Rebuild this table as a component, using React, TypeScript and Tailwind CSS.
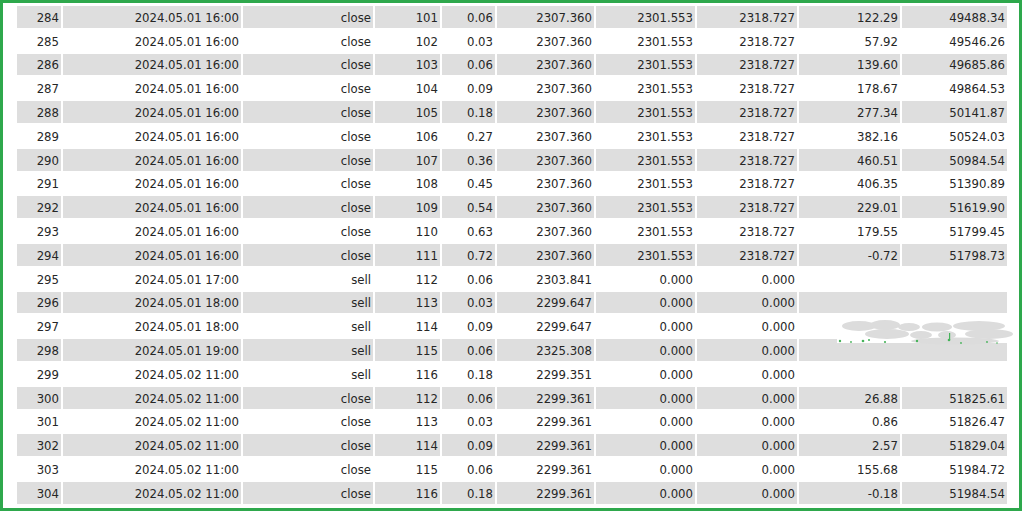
const rows: string[][] = [
  ["284", "2024.05.01 16:00", "close", "101", "0.06", "2307.360", "2301.553", "2318.727", "122.29", "49488.34"],
  ["285", "2024.05.01 16:00", "close", "102", "0.03", "2307.360", "2301.553", "2318.727", "57.92", "49546.26"],
  ["286", "2024.05.01 16:00", "close", "103", "0.06", "2307.360", "2301.553", "2318.727", "139.60", "49685.86"],
  ["287", "2024.05.01 16:00", "close", "104", "0.09", "2307.360", "2301.553", "2318.727", "178.67", "49864.53"],
  ["288", "2024.05.01 16:00", "close", "105", "0.18", "2307.360", "2301.553", "2318.727", "277.34", "50141.87"],
  ["289", "2024.05.01 16:00", "close", "106", "0.27", "2307.360", "2301.553", "2318.727", "382.16", "50524.03"],
  ["290", "2024.05.01 16:00", "close", "107", "0.36", "2307.360", "2301.553", "2318.727", "460.51", "50984.54"],
  ["291", "2024.05.01 16:00", "close", "108", "0.45", "2307.360", "2301.553", "2318.727", "406.35", "51390.89"],
  ["292", "2024.05.01 16:00", "close", "109", "0.54", "2307.360", "2301.553", "2318.727", "229.01", "51619.90"],
  ["293", "2024.05.01 16:00", "close", "110", "0.63", "2307.360", "2301.553", "2318.727", "179.55", "51799.45"],
  ["294", "2024.05.01 16:00", "close", "111", "0.72", "2307.360", "2301.553", "2318.727", "-0.72", "51798.73"],
  ["295", "2024.05.01 17:00", "sell", "112", "0.06", "2303.841", "0.000", "0.000"],
  ["296", "2024.05.01 18:00", "sell", "113", "0.03", "2299.647", "0.000", "0.000"],
  ["297", "2024.05.01 18:00", "sell", "114", "0.09", "2299.647", "0.000", "0.000"],
  ["298", "2024.05.01 19:00", "sell", "115", "0.06", "2325.308", "0.000", "0.000"],
  ["299", "2024.05.02 11:00", "sell", "116", "0.18", "2299.351", "0.000", "0.000"],
  ["300", "2024.05.02 11:00", "close", "112", "0.06", "2299.361", "0.000", "0.000", "26.88", "51825.61"],
  ["301", "2024.05.02 11:00", "close", "113", "0.03", "2299.361", "0.000", "0.000", "0.86", "51826.47"],
  ["302", "2024.05.02 11:00", "close", "114", "0.09", "2299.361", "0.000", "0.000", "2.57", "51829.04"],
  ["303", "2024.05.02 11:00", "close", "115", "0.06", "2299.361", "0.000", "0.000", "155.68", "51984.72"],
  ["304", "2024.05.02 11:00", "close", "116", "0.18", "2299.361", "0.000", "0.000", "-0.18", "51984.54"],
];

// blurred leftover blob sitting over rows 297/298
const Smudge = () => (
  <svg
    className="pointer-events-none absolute left-[834px] top-[313px]"
    width="178"
    height="34"
    viewBox="0 0 178 34"
  >
    <rect x="0" y="0" width="178" height="27" fill="#ffffff" />
    <g fill="#dcdcdc">
      <ellipse cx="22" cy="10" rx="17" ry="5" />
      <ellipse cx="48" cy="9" rx="15" ry="5" />
      <ellipse cx="72" cy="11" rx="11" ry="4" />
      <ellipse cx="100" cy="11" rx="15" ry="4.5" />
      <ellipse cx="142" cy="10" rx="26" ry="5" />
      <ellipse cx="50" cy="18" rx="22" ry="5" />
      <ellipse cx="84" cy="19" rx="11" ry="4" />
      <ellipse cx="110" cy="19" rx="9" ry="4" />
      <ellipse cx="152" cy="18" rx="24" ry="5" />
      <ellipse cx="118" cy="25" rx="44" ry="3.5" />
    </g>
    <g fill="#46b35a">
      <circle cx="3" cy="25" r="1.2" />
      <circle cx="14" cy="26" r="0.9" />
      <circle cx="26" cy="25" r="1.3" />
      <circle cx="32" cy="24" r="1" />
      <circle cx="48" cy="26" r="1.1" />
      <circle cx="80" cy="25" r="1.2" />
      <circle cx="112" cy="24" r="1.3" />
      <rect x="112" y="17" width="1.2" height="7" />
      <circle cx="124" cy="27" r="0.9" />
      <circle cx="150" cy="26" r="0.9" />
      <circle cx="160" cy="27" r="0.8" />
    </g>
  </svg>
);

const cols =
  "grid grid-cols-[46px_180px_132px_67px_55px_99px_101px_102px_103px_108px]";

export default function App() {
  return (
    <div className="h-[511px] w-[1024px] bg-white">
      <div className="relative h-[511px] w-[1022px] border-[3px] border-[#2ea84c] bg-white pl-[14px] pt-[2px] font-['DejaVu_Sans_Condensed','DejaVu_Sans',sans-serif] text-[13px] font-stretch-condensed text-[#262626]">
        {rows.map((r, i) => {
          const shaded = i % 2 === 0;
          const cells = r.length === 10 ? r : [...r, ""];
          return (
            <div key={r[0]} className={`${cols} h-[23.8px] py-px`}>
              {cells.map((c, j) => {
                const merged = r.length !== 10 && j === 8;
                return (
                  <div
                    key={j}
                    className={`flex items-center justify-end pr-[2px] pt-px leading-none ${
                      merged ? "col-span-2 mr-[3px]" : j < 9 ? "border-r-2 border-white" : "mr-[3px]"
                    } ${shaded ? "bg-[#dedede]" : ""}`}
                  >
                    {c}
                  </div>
                );
              })}
            </div>
          );
        })}
        <Smudge />
      </div>
    </div>
  );
}
